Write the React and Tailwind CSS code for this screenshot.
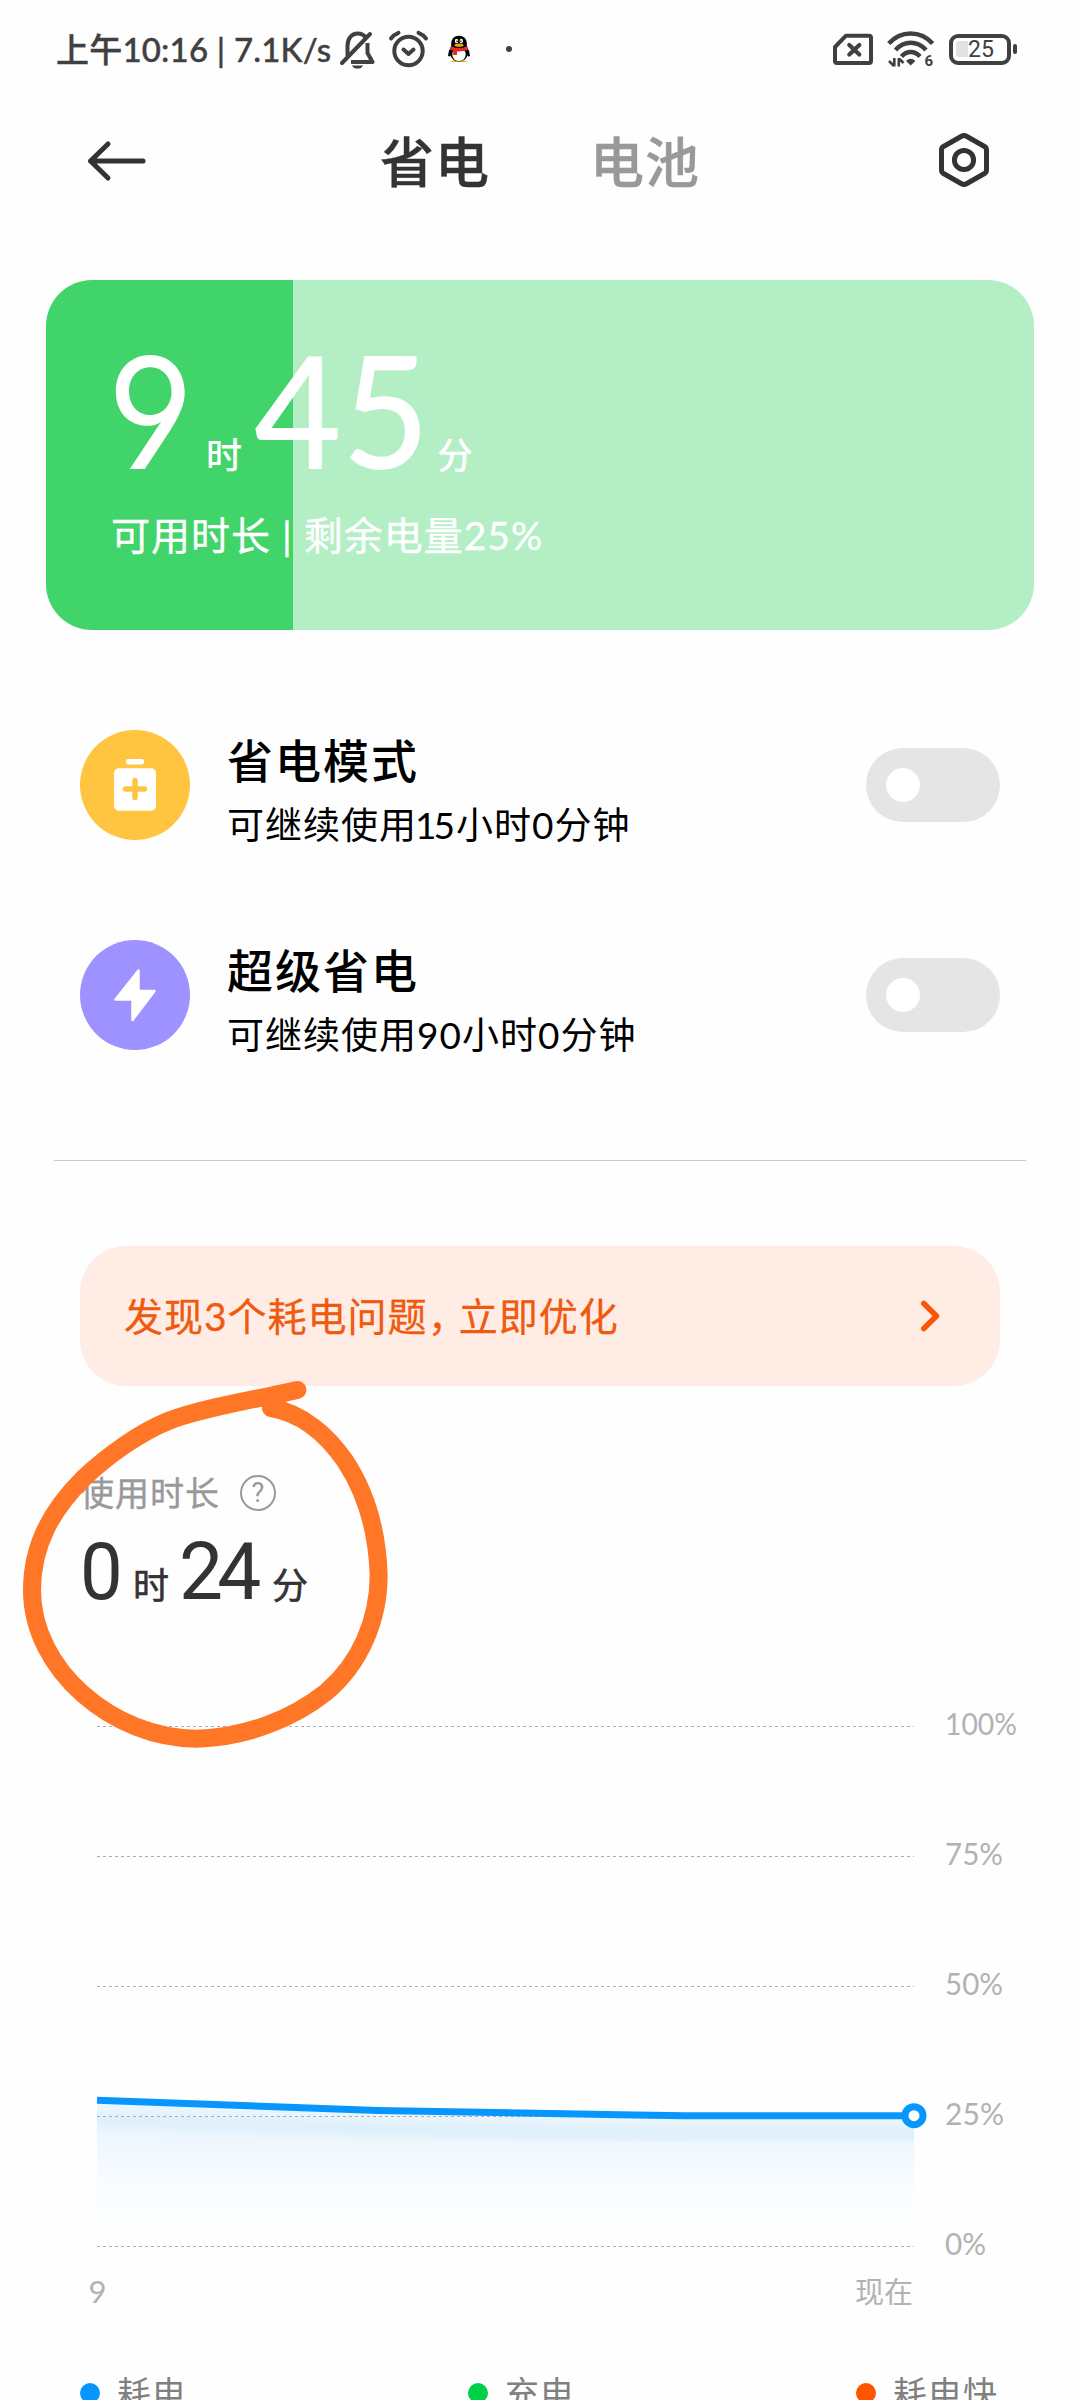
import React from "react";

const FONT = "font-['Lato','Noto_Sans_CJK_SC',sans-serif]";

function BellOff() {
  return (
    <svg className="ml-[8px] h-[40px] w-[36px]" viewBox="338 29 36 40" fill="none" stroke="#404040" strokeWidth="4">
      <path d="M346.500 56V46c0-8 4.500-12.500 10-12.500 4 0 6.500 1.500 8 4" />
      <path d="M366.500 43v10l5 9H350" strokeLinejoin="round" />
      <path d="M341 63L369 34" strokeLinecap="round" />
      <path d="M351 65.500h11c-1 2.500-3 3-5.500 3s-4.500-.5-5.500-3z" fill="#404040" stroke="none" />
    </svg>
  );
}

function Alarm() {
  return (
    <svg className="ml-[13px] h-[40px] w-[42px]" viewBox="387 29 42 40" fill="none" stroke="#404040" strokeWidth="4" strokeLinecap="round" strokeLinejoin="round">
      <circle cx="407.500" cy="51" r="14.200" />
      <path d="M402.500 49.500l5 4.500 5-4.500" />
      <path d="M390 38.500q3-4 7.500-5.700M425 38.500q-3-4-7.500-5.700" />
    </svg>
  );
}

function Penguin() {
  return (
    <svg className="ml-[16px] h-[30px] w-[26px]" viewBox="446 34 26 30">
      <path d="M450 62q4-2.500 9-2T468 62z" fill="#f6a400" />
      <path d="M451 47q-3 4-3 9l2 .5 2-3zM467 47q3 4 3 9l-2 .5-2-3z" fill="#000" />
      <ellipse cx="459" cy="53.500" rx="8.600" ry="8" fill="#000" />
      <ellipse cx="459" cy="54.500" rx="6.700" ry="6.600" fill="#fff" />
      <path d="M451.200 47v-3.500c0-5 3.300-7.800 7.800-7.800s7.800 2.800 7.800 7.800V47z" fill="#000" />
      <ellipse cx="456.500" cy="41" rx="1.700" ry="2.200" fill="#fff" />
      <ellipse cx="461.300" cy="41" rx="1.700" ry="2.200" fill="#fff" />
      <circle cx="457" cy="41.300" r=".8" />
      <circle cx="460.900" cy="41.300" r=".8" />
      <ellipse cx="459" cy="45.200" rx="4.500" ry="1.600" fill="#f6a400" />
      <path d="M450.500 46.500q8.500 3.200 17 0l.5 3.300q-5 2-11 1.700v3.500h-3.800v-4.200q-2-.5-3.200-1.200z" fill="#e02a2a" />
    </svg>
  );
}

function Sim() {
  return (
    <svg className="h-[34px] w-[42px]" viewBox="832 33 42 34" fill="none" stroke="#404040" strokeWidth="4" strokeLinejoin="round">
      <path d="M846 36.700h23q2 0 2 2V62q0 2-2 2h-32q-2 0-2-2V48z" />
      <path d="M849.300 46l10 9.500m0-9.500l-10 9.500" strokeLinecap="round" strokeWidth="4.200" />
    </svg>
  );
}

function Wifi() {
  return (
    <svg className="ml-[13px] h-[38px] w-[48px]" viewBox="887 31 48 38" fill="none" stroke="#404040" strokeWidth="4.600">
      <path d="M888.800 44.500Q898 34.500 910.700 34.500T932.600 44.500" />
      <path d="M895.500 51Q902 43.800 910.700 43.800T926 51" />
      <path d="M901.500 57.500Q905.500 53 910.700 53T920 57.500" />
      <path d="M906 62q4.700-4.500 9.400 0l-4.700 4.500z" fill="#404040" stroke="none" />
      <path d="M894.300 59v8.500M898.800 67.500V59" strokeWidth="2.600" />
      <path d="M889 62l5 5M899.500 60l4 4" strokeWidth="2.600" />
      <text x="924.500" y="67" fontSize="15" fontWeight="700" fontFamily="Roboto, sans-serif" fill="#404040" stroke="none">6</text>
    </svg>
  );
}

function BatteryLevel() {
  return (
    <div className="ml-[14px] flex items-center gap-[2px]">
      <div className="flex h-[31px] w-[62px] items-center rounded-[9px] border-[4px] border-[#404040] pl-[3px]">
        <div className="h-[16px] w-[12px] rounded-l-[3px] bg-[#e2e2e2]" />
        <span className="pt-[2px] font-['Roboto',sans-serif] text-[23px] leading-[28px] text-[#404040]">25</span>
      </div>
      <div className="h-[10px] w-[4px] rounded-[2px] bg-[#404040]" />
    </div>
  );
}

function StatusBar() {
  return (
    <div className="flex h-[98px] shrink-0 items-center pl-[56px] pr-[63px]">
      <span className="w-[275px] whitespace-pre text-[33px] font-medium leading-[40px] tracking-[0.200px] text-[#404040] [-webkit-text-stroke:0.400px_#404040]">上午10:16 | 7.1K/s</span>
      <BellOff />
      <Alarm />
      <Penguin />
      <div className="ml-[34px] h-[6px] w-[6px] rounded-full bg-[#404040]" />
      <div className="ml-auto flex items-center">
        <Sim />
        <Wifi />
        <BatteryLevel />
      </div>
    </div>
  );
}

function Header() {
  return (
    <header className="flex h-[126px] shrink-0 items-center pl-[86px] pr-[88px] text-[54px] font-medium leading-[60px] tracking-[1px]">
      <svg className="h-[44px] w-[62px]" viewBox="86 138.500 62 44" fill="none" stroke="#333" strokeWidth="5" strokeLinecap="round" strokeLinejoin="round">
        <path d="M143 160.500H90.500M108 143.500L90.500 160.500L108 177.500" />
      </svg>
      <span className="ml-[232px] pt-[3px] text-[#333] [-webkit-text-stroke:0.400px_#333]">省电</span>
      <span className="ml-[100px] pt-[3px] text-[#999] [-webkit-text-stroke:0.400px_#999]">电池</span>
      <svg className="ml-auto h-[56px] w-[56px]" viewBox="936 133 56 56" fill="none" stroke="#333" strokeWidth="5" strokeLinejoin="round">
        <path d="M961.500 136.300q2.500-1.400 5 0L984.500 146.500q2 1.200 2 3.500v20q0 2.300-2 3.500L966.500 183.700q-2.500 1.400-5 0L943.500 173.500q-2-1.200-2-3.500v-20q0-2.300 2-3.500z" />
        <circle cx="964" cy="160" r="9.600" />
      </svg>
    </header>
  );
}

function BatteryCard() {
  return (
    <section className="mx-[46px] mt-[56px] h-[350px] shrink-0 rounded-[46px] bg-linear-to-r from-[#41d46a] from-25% to-[#b3eec4] to-25% pl-[61px] pt-[58px] text-white">
      <div className="flex h-[142px] items-baseline">
        <span className="w-[99px] origin-left scale-x-[0.960] font-['Inter',sans-serif] text-[155px] leading-[142px] [font-feature-settings:'cv04']">9</span>
        <span className="w-[48px] text-[36px] font-medium">时</span>
        <span className="w-[183px] origin-left scale-x-[0.970] text-[156px] font-medium leading-[142px]">45</span>
        <span className="text-[36px] font-medium">分</span>
      </div>
      <p className="ml-[4px] mt-[21px] whitespace-pre text-[39px] leading-[68px] tracking-[1px] [-webkit-text-stroke:0.400px_white]">可用时长 | 剩余电量25%</p>
    </section>
  );
}

function Toggle() {
  return (
    <div className="ml-auto flex h-[74px] w-[134px] items-center rounded-full bg-[#e5e5e5] pl-[20px]">
      <div className="h-[34px] w-[34px] rounded-full bg-white" />
    </div>
  );
}

function ModeRow({ color, icon, title, children }) {
  return (
    <div className="flex h-[210px] shrink-0 items-center px-[80px]">
      <div className={`flex h-[110px] w-[110px] items-center justify-center rounded-full ${color}`}>{icon}</div>
      <div className="ml-[37px] flex flex-col pt-[16px] text-black">
        <span className="text-[46px] font-medium leading-[64px] tracking-[2px]">{title}</span>
        <span className="text-[37px] leading-[64px] tracking-[1px]">{children}</span>
      </div>
      <Toggle />
    </div>
  );
}

const batteryIcon = (
  <svg className="h-[110px] w-[110px]" viewBox="80 730 110 110">
    <rect x="126" y="759" width="18" height="5.500" rx="2" fill="#fff" />
    <rect x="114" y="768.300" width="42" height="42.400" rx="5" fill="#fff" />
    <path d="M135 780.500v17M125.500 789h19" stroke="#ffc541" strokeWidth="5.500" strokeLinecap="round" />
  </svg>
);

const boltIcon = (
  <svg className="h-[110px] w-[110px]" viewBox="80 940 110 110">
    <path d="M138.500 970.500V991H154.500L132.500 1020V999.500H115.500z" fill="#fff" stroke="#fff" strokeWidth="2.500" strokeLinejoin="round" />
  </svg>
);

function Banner() {
  return (
    <div className="mx-[80px] mt-[85px] flex h-[140px] shrink-0 items-center rounded-[46px] bg-[#ffede5] pl-[44px] pr-[58px] text-[#ef5a10]">
      <span className="text-[39px] leading-[60px] tracking-[1px] [-webkit-text-stroke:0.300px_#ef5a10]">
        发现3个耗电问题<span className="tracking-[-8px]">，</span>立即优化
      </span>
      <svg className="ml-auto h-[36px] w-[24px]" viewBox="918 1298 24 36" fill="none" stroke="#fb5607" strokeWidth="5.500" strokeLinecap="round" strokeLinejoin="round">
        <path d="M923.800 1303.500L936.500 1316L923.800 1328.500" />
      </svg>
    </div>
  );
}

function Usage() {
  return (
    <section className="h-[314px] shrink-0 pl-[80px] pt-[84px]">
      <div className="flex h-[46px] items-center text-[#999]">
        <span className="text-[34px] leading-[46px] tracking-[1px] [-webkit-text-stroke:0.400px_#999]">使用时长</span>
        <div className="ml-[20px] flex h-[36px] w-[36px] items-center justify-center rounded-full border-2 border-[#999] font-['Roboto',sans-serif] text-[27px] leading-[28px]">?</div>
      </div>
      <div className="mt-[14px] flex h-[84px] items-baseline text-[#333]">
        <span className="w-[53px] origin-left scale-x-[0.950] font-['Roboto',sans-serif] text-[80px] leading-[84px]">0</span>
        <span className="w-[46px] text-[36px] [-webkit-text-stroke:0.600px_#333]">时</span>
        <span className="w-[93px] origin-left scale-x-[0.980] font-['Roboto',sans-serif] text-[80px] leading-[84px] tracking-[-6px]">24</span>
        <span className="text-[36px] [-webkit-text-stroke:0.600px_#333]">分</span>
      </div>
    </section>
  );
}

const LINE = "97,2100.300 378,2110.500 620,2114.700 684,2115.700 914,2115.700";
const GRID = [
  { y: 1726.5, label: "100%", w: 72 },
  { y: 1856.5, label: "75%", w: 58 },
  { y: 1986.5, label: "50%", w: 58 },
  { y: 2116.5, label: "25%", w: 59 },
  { y: 2246.5, label: "0%", w: 41 },
];

function Chart() {
  return (
    <svg className="h-[630px] w-[1080px] shrink-0" viewBox="0 1700 1080 630" fontFamily="Lato, 'Noto Sans CJK SC', sans-serif">
      <defs>
        <linearGradient id="area" gradientUnits="userSpaceOnUse" x1="0" x2="0" y1="2105" y2="2240">
          <stop offset="0" stopColor="#e9f5fe" />
          <stop offset="0.350" stopColor="#f1f8fe" />
          <stop offset="0.650" stopColor="#f9fdff" />
          <stop offset="1" stopColor="#fefefe" />
        </linearGradient>
        <filter id="soft" x="-10%" y="-50%" width="120%" height="200%">
          <feGaussianBlur stdDeviation="4" />
        </filter>
        <clipPath id="below">
          <polygon points={`${LINE} 914,2246 97,2246`} />
        </clipPath>
      </defs>
      <g clipPath="url(#below)">
        <rect x="97" y="2095" width="817" height="151" fill="url(#area)" />
        <polyline points="80,2119 378,2129 620,2133 684,2134 930,2134" fill="none" stroke="#dff0fb" strokeWidth="17" filter="url(#soft)" />
      </g>
      {GRID.map((g) => (
        <g key={g.label}>
          <line x1="97" x2="914" y1={g.y} y2={g.y} stroke="#acacac" strokeDasharray="3 3" />
          <text x="945" y={g.y + 8.5} fontSize="30" fill="#b2b2b2" textLength={g.w} lengthAdjust="spacingAndGlyphs">{g.label}</text>
        </g>
      ))}
      <polyline points={LINE} fill="none" stroke="#0796fc" strokeWidth="7" />
      <circle cx="914" cy="2115.700" r="9" fill="#fff" stroke="#0796fc" strokeWidth="7" />
      <text x="88.500" y="2303" fontSize="31" fill="#b2b2b2">9</text>
      <text x="855" y="2303" fontSize="29" fill="#b2b2b2">现在</text>
    </svg>
  );
}

function LegendItem({ dot, label }) {
  return (
    <div className="flex items-center gap-[17px]">
      <div className={`h-[20px] w-[20px] rounded-full ${dot}`} />
      <span className="text-[34px] leading-[46px] tracking-[1px] text-[#808080]">{label}</span>
    </div>
  );
}

function HandDrawnLoop() {
  return (
    <svg className="pointer-events-none absolute left-0 top-[1370px] h-[400px] w-[420px]" viewBox="0 0 1260 1200" fill="none" stroke="#ff7626" strokeWidth="54" strokeLinecap="round" strokeLinejoin="round">
      <path d="M892 60C800 82 610 112 505 153C420 187 325 255 250 325C160 415 96 520 96 660C96 900 340 1106 590 1106C740 1102 880 1045 980 965C1080 880 1136 750 1136 615C1132 490 1100 370 1035 272C985 200 910 130 813 114" />
    </svg>
  );
}

export default function App() {
  return (
    <div className={`relative flex h-[2400px] w-[1080px] flex-col overflow-hidden bg-[#fefefe] ${FONT}`}>
      <StatusBar />
      <Header />
      <BatteryCard />
      <div className="h-[50px] shrink-0" />
      <ModeRow color="bg-[#ffc541]" icon={batteryIcon} title="省电模式">
        可继续使用<span className="-ml-[2px] tracking-[-3px]">1</span>5小时0分钟
      </ModeRow>
      <ModeRow color="bg-[#9d92ff]" icon={boltIcon} title="超级省电">
        可继续使用90小时0分钟
      </ModeRow>
      <hr className="mx-[54px] mt-[60px] h-px shrink-0 border-0 bg-[#cacaca]" />
      <Banner />
      <Usage />
      <Chart />
      <div className="mt-[40px] flex h-[46px] shrink-0 justify-between pl-[80px] pr-[82px]">
        <LegendItem dot="bg-[#0796fc]" label="耗电" />
        <LegendItem dot="bg-[#00d048]" label="充电" />
        <LegendItem dot="bg-[#ff5500]" label="耗电快" />
      </div>
      <HandDrawnLoop />
    </div>
  );
}
